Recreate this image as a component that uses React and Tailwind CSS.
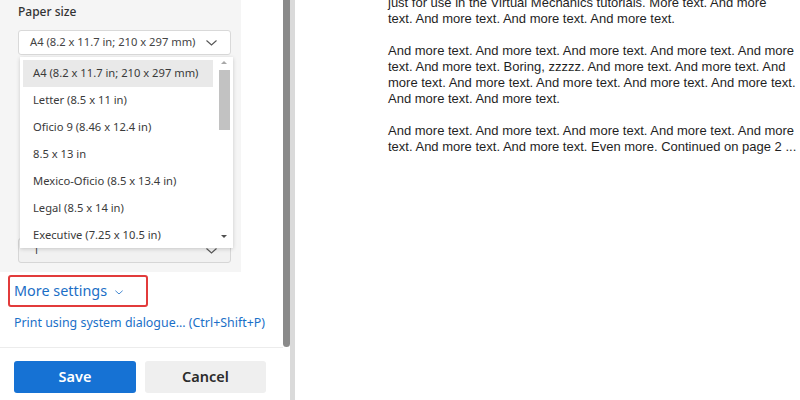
import React from 'react';

const sizes = [
  'A4 (8.2 x 11.7 in; 210 x 297 mm)',
  'Letter (8.5 x 11 in)',
  'Oficio 9 (8.46 x 12.4 in)',
  '8.5 x 13 in',
  'Mexico-Oficio (8.5 x 13.4 in)',
  'Legal (8.5 x 14 in)',
  'Executive (7.25 x 10.5 in)',
];

const pageLines = [
  ['just for use in the Virtual Mechanics tutorials. More text. And more', 'text. And more text. And more text. And more text.'],
  [
    'And more text. And more text. And more text. And more text. And more',
    'text. And more text. Boring, zzzzz. And more text. And more text. And',
    'more text. And more text. And more text. And more text. And more text.',
    'And more text. And more text.',
  ],
  ['And more text. And more text. And more text. And more text. And more', 'text. And more text. And more text. Even more. Continued on page 2 ...'],
];

const Chevron = ({ className = '', color = '#555' }) => (
  <svg width="11" height="6" viewBox="0 0 11 6" className={className}>
    <polyline points="0.5,0.5 5.5,5 10.5,0.5" fill="none" stroke={color} strokeWidth="1.1" />
  </svg>
);

const App = () => {
  return (
    <div className="flex w-[800px] h-[400px] overflow-hidden bg-white">
      {/* settings panel */}
      <div className="w-[283px] flex flex-col font-['Noto_Sans',sans-serif]">
        <div className="relative w-[241px] h-[272px] bg-[#f5f5f5] pt-[3px]">
          <div className="pl-[18px] text-[12px] leading-[18px] font-medium text-[#333]">Paper size</div>
          <div className="ml-[18px] mt-[9px] w-[213px] h-[25px] bg-white border border-[#d9d9d9] rounded-[3px] flex items-center justify-between pl-[11px] pr-[13px]">
            <span className="text-[11.2px] text-[#444]">A4 (8.2 x 11.7 in; 210 x 297 mm)</span>
            <Chevron />
          </div>
          <div className="ml-[18px] mt-[183px] w-[213px] h-[25px] bg-[#f1f1f1] border border-[#d6d6d6] rounded-[3px] flex items-center justify-between pl-[14px] pr-[13px]">
            <span className="text-[11.2px] text-[#444]">1</span>
            <Chevron />
          </div>

          {/* open dropdown list */}
          <div className="absolute left-[20px] top-[57px] w-[213px] h-[191px] bg-white shadow-[0_1px_4px_rgba(0,0,0,0.18)] flex overflow-hidden">
            <div className="ml-[3px] pt-[3px] w-[190px] flex flex-col">
              {sizes.map((s, i) => (
                <div
                  key={s}
                  className={`h-[27px] shrink-0 flex items-center pl-[10px] text-[11.2px] text-[#3a3a3a] ${i === 0 ? 'bg-[#e9e9e9]' : ''}`}
                >
                  {s}
                </div>
              ))}
            </div>
            <div className="ml-[5px] w-[12px] flex flex-col items-center pt-[4px]">
              <div className="w-0 h-0 border-l-[3px] border-r-[3px] border-b-[3px] border-l-transparent border-r-transparent border-b-[#a8a8a8]" />
              <div className="mt-[6px] w-[11px] h-[60px] bg-[#c2c2c2]" />
              <div className="mt-[105px] w-0 h-0 border-l-[3px] border-r-[3px] border-t-[3px] border-l-transparent border-r-transparent border-t-[#505050]" />
            </div>
          </div>
        </div>

        <div className="mt-[3px] ml-[8px] w-[140px] h-[32px] border-2 border-[#e23b3b] rounded-[3px] flex items-center pl-[4px] gap-[8px]">
          <span className="text-[14.4px] text-[#1b6ec6]">More settings</span>
          <Chevron className="w-[8px] h-[5px] mt-[3px]" color="#1b6ec6" />
        </div>
        <div className="mt-[8px] pl-[14px] text-[12.4px] leading-[16px] text-[#1a70c8]">
          Print using system dialogue... (Ctrl+Shift+P)
        </div>
        <div className="mt-[16px] border-t border-[#ececec]" />
        <div className="mt-[13px] flex gap-[9px] pl-[14px]">
          <button className="w-[122px] h-[32px] rounded-[3px] bg-[#1672d4] text-white text-[14.5px] font-semibold">Save</button>
          <button className="w-[121px] h-[32px] rounded-[3px] bg-[#efefef] text-[#2b2b2b] text-[14.5px] font-semibold">Cancel</button>
        </div>
      </div>

      {/* panel scrollbar */}
      <div className="flex">
        <div className="w-[7px] h-[347px] bg-[#8a8a8a] rounded-b-[4px]" />
        <div className="w-[5px] h-full bg-[#dadada]" />
      </div>

      {/* page preview */}
      <div className="flex-1 pl-[93px] font-['Liberation_Sans',Arial,sans-serif] text-[13px] leading-[16px] text-[#1f1f1f]">
        <div className="mt-[-5px] flex flex-col gap-[16px]">
          {pageLines.map((para, i) => (
            <div key={i}>
              {para.map((line) => (
                <div key={line} className="whitespace-nowrap">{line}</div>
              ))}
            </div>
          ))}
        </div>
      </div>
    </div>
  );
};

export default App;
